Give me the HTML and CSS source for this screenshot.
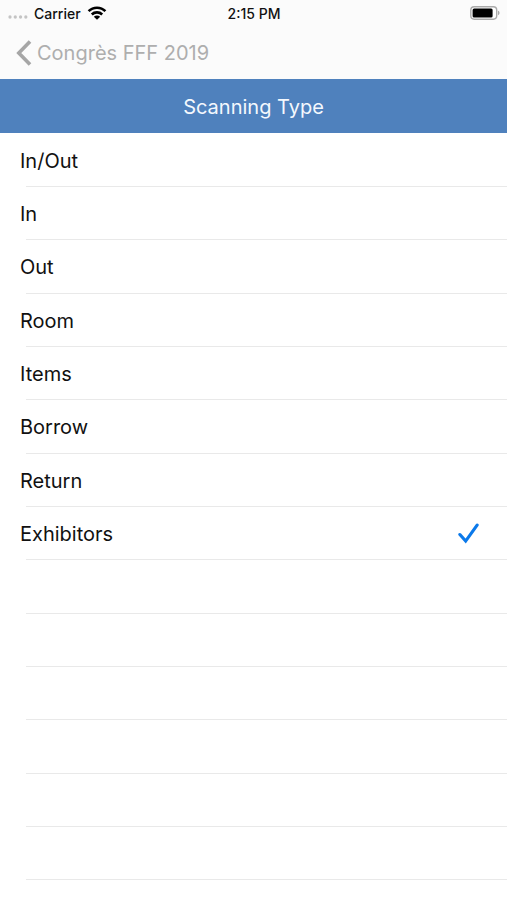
FILE: index.html
```html
<!DOCTYPE html>
<html lang="en">
<head>
<meta charset="utf-8">
<meta name="viewport" content="width=device-width, initial-scale=1">
<title>Scanning Type</title>
<link rel="stylesheet" href="styles.css">
</head>
<body>
<header class="top">
  <div class="status">
    <div class="status-left">
      <svg class="signal" viewBox="0 0 22 6" aria-hidden="true"><circle cx="2.2" cy="3" r="1.8"/><circle cx="8" cy="3" r="1.8"/><circle cx="13.8" cy="3" r="1.8"/><circle cx="19.6" cy="3" r="1.8"/></svg>
      <span>Carrier</span>
      <svg class="wifi" viewBox="0 0 20 14" aria-hidden="true"><path d="M1.600 5.200C6.300.5 13.700.5 18.400 5.200M4.800 8.500c2.900-2.800 7.500-2.800 10.400 0"/><path class="wifi-dot" d="M10 13.800 6.800 10.700c1.800-1.500 4.600-1.500 6.400 0z"/></svg>
    </div>
    <time class="clock">2:15 PM</time>
    <svg class="battery" viewBox="0 0 30 14" aria-hidden="true"><rect class="case" x=".8" y=".8" width="25.900" height="12.400" rx="3.400"/><rect x="2.600" y="2.600" width="20" height="8.800" rx="1.500"/><path class="cap" d="M28 4.800c2 .6 2 3.800 0 4.400z"/></svg>
  </div>
  <nav class="nav">
    <a class="back" href="#">
      <svg class="chevron" viewBox="0 0 16 26" aria-hidden="true"><path d="M14 1.500 2.800 13 14 24.500"/></svg>
      <span>Congrès FFF 2019</span>
    </a>
  </nav>
</header>
<main>
  <h1 class="title" id="title">Scanning Type</h1>
  <div class="list" role="radiogroup" aria-labelledby="title">
    <label class="row"><span>In/Out</span><input type="radio" name="type"></label>
    <label class="row"><span>In</span><input type="radio" name="type"></label>
    <label class="row"><span>Out</span><input type="radio" name="type"></label>
    <label class="row"><span>Room</span><input type="radio" name="type"></label>
    <label class="row"><span>Items</span><input type="radio" name="type"></label>
    <label class="row"><span>Borrow</span><input type="radio" name="type"></label>
    <label class="row"><span>Return</span><input type="radio" name="type"></label>
    <label class="row"><span>Exhibitors</span><input type="radio" name="type" checked><svg class="check" viewBox="0 0 20 20" aria-hidden="true"><path d="M1.800 11 7.300 17.200 18.200 2"/></svg></label>
    <div class="row"></div>
    <div class="row"></div>
    <div class="row"></div>
    <div class="row"></div>
    <div class="row"></div>
    <div class="row"></div>
  </div>
</main>
</body>
</html>
```
FILE: styles.css
```css
* {
  box-sizing: border-box;
}

body {
  margin: 0;
  background: #fff;
  color: #111;
  font-family: Inter, "Liberation Sans", sans-serif;
  font-size: 20px;
}

svg {
  display: block;
  flex: none;
}

.top {
  background: #fbfbfb;
}

.status {
  display: grid;
  grid-template-columns: 1fr auto 1fr;
  align-items: center;
  height: 26px;
  padding: 0 7px 0 8px;
  font-size: 14px;
  font-weight: 500;
}

.status-left {
  display: flex;
  align-items: center;
  gap: 6px;
}

.signal {
  width: 20px;
  height: 6px;
  margin-top: 8px;
  fill: #c4c4c4;
}

.wifi {
  width: 20px;
  height: 14px;
  fill: none;
  stroke: #000;
  stroke-width: 2.6;
}

.wifi-dot {
  fill: #000;
  stroke: none;
}

.battery {
  width: 30px;
  height: 14px;
  justify-self: end;
  fill: #000;
}

.case {
  fill: #fff;
  stroke: #aaa;
  stroke-width: 1.4;
}

.cap {
  fill: #aaa;
}

.nav {
  display: flex;
  align-items: center;
  height: 53px;
  padding: 0 16px;
}

.back {
  display: flex;
  align-items: center;
  gap: 5px;
  color: #aeaeae;
  text-decoration: none;
}

.chevron {
  width: 16px;
  height: 26px;
  fill: none;
  stroke: #a6a6a6;
  stroke-width: 3.6;
}

.title {
  margin: 0;
  height: 54px;
  background: #4f81bd;
  color: #f4f8fd;
  font-size: 20px;
  font-weight: 400;
  line-height: 56px;
  text-align: center;
}

.list {
  padding-top: 1px;
}

.row {
  display: flex;
  align-items: center;
  justify-content: space-between;
  height: 53px;
  padding: 0 28px 0 20px;
  background: linear-gradient(#e9e9e9, #e9e9e9) 26px 100% / 100% 1px no-repeat;
}

.row:nth-child(3n) {
  height: 54px;
}

.row input {
  appearance: none;
  width: 0;
  height: 0;
  margin: 0 0 0 auto;
}

.check {
  display: none;
  width: 21px;
  height: 21px;
  fill: none;
  stroke: #0b79ea;
  stroke-width: 3;
  stroke-linecap: round;
}

input:checked + .check {
  display: block;
}
```
